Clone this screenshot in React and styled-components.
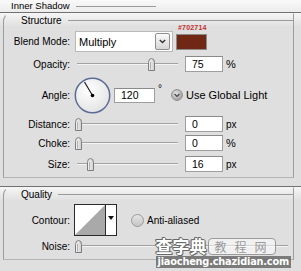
import React from "react";
import styled, { createGlobalStyle } from "styled-components";

const Global = createGlobalStyle`
  body {
    margin: 0;
    background: #dfdfdf;
  }
`;

const Page = styled.div`
  position: relative;
  width: 301px;
  height: 271px;
  overflow: hidden;
  background: #dfdfdf;
  font-family: "Liberation Sans", Arial, sans-serif;
  font-size: 10px;
  color: #000;
`;

const Header = styled.div`
  height: 12px;
  display: flex;
  align-items: center;
  padding-left: 11px;
  background: linear-gradient(#f9f9f9, #ececec);
`;

const HeaderTitle = styled.span`
  font-size: 9.5px;
  line-height: 12px;
`;

const Rule = styled.div`
  height: 1px;
  background: ${(p) => p.color || "#9a9a9a"};
  margin-left: ${(p) => p.gap || 6}px;
  width: ${(p) => (p.width ? p.width + "px" : "auto")};
  flex: ${(p) => (p.width ? "none" : 1)};
`;

const Section = styled.div`
  border-top: 1px solid #727272;
  background: linear-gradient(#f6f6f6, #dfdfdf 14px);
  padding: 0 7px ${(p) => p.bottom || 0}px 3px;
`;

const Box = styled.div`
  border: 1px solid #9c9c9c;
  border-top-color: #f4f4f4;
  border-bottom-color: #b4b4b4;
  border-top-left-radius: 8px;
  padding-bottom: ${(p) => p.bottom}px;
`;

const TitleRow = styled.div`
  height: 13px;
  display: flex;
  align-items: center;
  padding-left: 17px;
`;

const Row = styled.div`
  display: flex;
  align-items: center;
  height: ${(p) => p.h}px;
  margin-top: ${(p) => p.mt}px;
`;

const Label = styled.div`
  width: 66px;
  flex: none;
  text-align: right;
  white-space: nowrap;
`;

const Select = styled.div`
  width: 98px;
  height: 21px;
  box-sizing: border-box;
  margin-left: 5px;
  border: 1px solid #b9b9b9;
  background: #fff;
  display: flex;
  align-items: center;
  justify-content: space-between;
  padding: 0 2px 0 3px;
  font-size: 11px;
`;

const DropButton = styled.div`
  width: 15px;
  height: 17px;
  box-sizing: border-box;
  border: 1px solid #8f8f8f;
  border-radius: 2px;
  background: linear-gradient(#fbfbfb, #d6d6d6);
  display: flex;
  align-items: center;
  justify-content: center;
`;

const Swatch = styled.div`
  position: relative;
  width: 31px;
  height: 16px;
  box-sizing: border-box;
  margin-left: 3px;
  border: 1px solid #8a8a8a;
  background: ${(p) => p.color};
`;

const HexTag = styled.span`
  position: absolute;
  left: 1px;
  top: -11px;
  font-size: 7px;
  font-weight: bold;
  letter-spacing: 0.2px;
  color: #c0302c;
`;

const SliderWrap = styled.div`
  position: relative;
  width: ${(p) => p.w || 104}px;
  height: 13px;
  margin-left: 4px;
  flex: none;
`;

const Track = styled.div`
  position: absolute;
  left: 3px;
  right: 0;
  top: 5px;
  height: 1px;
  background: #a2a2a2;
  border-bottom: 1px solid #f4f4f4;
`;

const ThumbBox = styled.div`
  position: absolute;
  top: 0;
  width: 9px;
  height: 13px;
`;

const Field = styled.div`
  width: ${(p) => p.w || 38}px;
  height: ${(p) => p.h || 16}px;
  box-sizing: border-box;
  margin-left: ${(p) => p.ml}px;
  border: 1px solid #9e9e9e;
  border-top-color: #8a8a8a;
  background: #fff;
  padding-left: 6px;
  display: flex;
  align-items: center;
  font-size: 10.5px;
  flex: none;
`;

const Unit = styled.span`
  margin-left: 3px;
  font-size: ${(p) => p.size || 10}px;
  align-self: ${(p) => (p.top ? "flex-start" : "center")};
  margin-top: ${(p) => (p.top ? 6 : 0)}px;
`;

const Dial = styled.svg`
  margin-left: 4px;
  flex: none;
`;

const Check = styled.svg`
  margin-left: ${(p) => p.ml}px;
  flex: none;
`;

const CheckText = styled.span`
  margin-left: ${(p) => p.ml}px;
  font-size: ${(p) => p.size || 10}px;
  white-space: nowrap;
`;

const Contour = styled.div`
  margin-left: 4px;
  width: 43px;
  height: 32px;
  box-sizing: border-box;
  border: 1px solid #2a2a2a;
  display: flex;
  background: #fff;
`;

const ContourPreview = styled.svg`
  width: 30px;
  height: 30px;
  border-right: 1px solid #2a2a2a;
`;

const ContourArrow = styled.div`
  flex: 1;
  display: flex;
  justify-content: center;
  padding-top: 11px;
`;

const Mark = styled.div`
  position: absolute;
  right: 10px;
  bottom: 3px;
  display: flex;
  flex-direction: column;
  align-items: flex-start;
`;

const MarkTop = styled.div`
  display: flex;
  align-items: center;
`;

const MarkBig = styled.span`
  font-family: "Noto Sans CJK SC", sans-serif;
  font-weight: bold;
  font-size: 17px;
  line-height: 18px;
  color: #fff;
  letter-spacing: 0;
  text-shadow: -1px 0 #6a6a6a, 1px 0 #6a6a6a, 0 -1px #6a6a6a, 0 1px #6a6a6a,
    1px 1px #6a6a6a, -1px -1px #6a6a6a;
`;

const MarkTab = styled.span`
  margin-left: 1px;
  padding: 0 0 0 6px;
  border: 1px solid #9a9a9a;
  border-radius: 4px;
  background: rgba(255, 255, 255, 0.55);
  font-family: "Noto Sans CJK SC", sans-serif;
  font-size: 12px;
  line-height: 15px;
  letter-spacing: 8px;
  color: #9a9a9a;
`;

const MarkUrl = styled.span`
  margin-top: 1px;
  padding: 0 2px;
  background: rgba(90, 90, 90, 0.75);
  font-family: "DejaVu Sans", sans-serif;
  font-weight: bold;
  font-size: 9.8px;
  line-height: 12px;
  color: #fff;
  letter-spacing: -0.2px;
`;

function Thumb({ at }) {
  return (
    <ThumbBox style={{ left: at }}>
      <svg width="9" height="13" viewBox="0 0 9 13">
        <defs>
          <linearGradient id="tg" x1="0" x2="1" y1="0" y2="0">
            <stop offset="0" stopColor="#f6f6f6" />
            <stop offset="1" stopColor="#cfcfcf" />
          </linearGradient>
        </defs>
        <path
          d="M1.5 12.5 V4.5 Q1.5 0.5 4.5 0.5 Q7.5 0.5 7.5 4.5 V12.5 Z"
          fill="url(#tg)"
          stroke="#7c7c7c"
        />
        <line x1="3.5" y1="4" x2="3.5" y2="11.5" stroke="#b0b0b0" />
      </svg>
    </ThumbBox>
  );
}

function Slider({ at, w }) {
  return (
    <SliderWrap w={w}>
      <Track />
      <Thumb at={at} />
    </SliderWrap>
  );
}

export default function App() {
  return (
    <Page>
      <Global />
      <Header>
        <HeaderTitle>Inner Shadow</HeaderTitle>
        <Rule width={80} />
      </Header>

      <Section bottom={8}>
        <Box bottom={5}>
          <TitleRow>
            <span>Structure</span>
            <Rule />
          </TitleRow>

          <Row h={21} mt={4}>
            <Label>Blend Mode:</Label>
            <Select>
              <span>Multiply</span>
              <DropButton>
                <svg width="7" height="5" viewBox="0 0 7 5">
                  <path d="M0.8 1 L3.5 3.6 L6.2 1" fill="none" stroke="#333" strokeWidth="1.4" />
                </svg>
              </DropButton>
            </Select>
            <Swatch color="#702714">
              <HexTag>#702714</HexTag>
            </Swatch>
          </Row>

          <Row h={16} mt={4}>
            <Label>Opacity:</Label>
            <Slider at={73} />
            <Field ml={7}>75</Field>
            <Unit size={11}>%</Unit>
          </Row>

          <Row h={36} mt={5}>
            <Label>Angle:</Label>
            <Dial width="37" height="37" viewBox="0 0 37 37">
              <defs>
                <radialGradient id="dg" cx="0.4" cy="0.35" r="0.7">
                  <stop offset="0" stopColor="#ffffff" />
                  <stop offset="1" stopColor="#e2e2e2" />
                </radialGradient>
              </defs>
              <circle cx="18.5" cy="18.5" r="17.2" fill="url(#dg)" stroke="#5a6c95" strokeWidth="1.5" />
              <line x1="18.5" y1="18.5" x2="10.5" y2="5" stroke="#111" strokeWidth="1.1" />
              <circle cx="18.5" cy="18.5" r="1.8" fill="#000" />
            </Dial>
            <Field ml={3} w={41} h={15}>120</Field>
            <Unit top>°</Unit>
            <Check ml={9} width="12" height="12" viewBox="0 0 12 12">
              <defs>
                <radialGradient id="rg" cx="0.4" cy="0.35" r="0.7">
                  <stop offset="0" stopColor="#e4e4e4" />
                  <stop offset="1" stopColor="#9c9c9c" />
                </radialGradient>
              </defs>
              <circle cx="6" cy="6" r="5.4" fill="url(#rg)" stroke="#8c8c8c" />
              <path d="M3.6 5 L6 7.4 L8.4 5" fill="none" stroke="#4a4a4a" strokeWidth="1.3" />
            </Check>
            <CheckText ml={3} size={11}>Use Global Light</CheckText>
          </Row>

          <Row h={16} mt={3}>
            <Label>Distance:</Label>
            <Slider at={0} />
            <Field ml={7}>0</Field>
            <Unit>px</Unit>
          </Row>

          <Row h={16} mt={3}>
            <Label>Choke:</Label>
            <Slider at={0} />
            <Field ml={7}>0</Field>
            <Unit size={11}>%</Unit>
          </Row>

          <Row h={16} mt={5}>
            <Label>Size:</Label>
            <Slider at={12} />
            <Field ml={7}>16</Field>
            <Unit>px</Unit>
          </Row>
        </Box>
      </Section>

      <Section>
        <Box bottom={7}>
          <TitleRow>
            <span>Quality</span>
            <Rule />
          </TitleRow>

          <Row h={32} mt={3}>
            <Label>Contour:</Label>
            <Contour>
              <ContourPreview viewBox="0 0 30 30">
                <path d="M0 30 L30 0 L30 30 Z" fill="#a9a9a9" />
              </ContourPreview>
              <ContourArrow>
                <svg width="6" height="4" viewBox="0 0 6 4">
                  <path d="M0 0 H6 L3 4 Z" fill="#111" />
                </svg>
              </ContourArrow>
            </Contour>
            <Check ml={14} width="13" height="13" viewBox="0 0 13 13">
              <defs>
                <linearGradient id="ag" x1="0" x2="0" y1="0" y2="1">
                  <stop offset="0" stopColor="#e6e6e6" />
                  <stop offset="1" stopColor="#c4c4c4" />
                </linearGradient>
              </defs>
              <circle cx="6.5" cy="6.5" r="6" fill="url(#ag)" stroke="#9a9a9a" />
            </Check>
            <CheckText ml={3}>Anti-aliased</CheckText>
          </Row>

          <Row h={12} mt={4}>
            <Label>Noise:</Label>
            <Slider at={0} w={214} />
          </Row>
        </Box>
      </Section>

      <Mark>
        <MarkTop>
          <MarkBig>查字典</MarkBig>
          <MarkTab>教程网</MarkTab>
        </MarkTop>
        <MarkUrl>jiaocheng.chazidian.com</MarkUrl>
      </Mark>
    </Page>
  );
}
